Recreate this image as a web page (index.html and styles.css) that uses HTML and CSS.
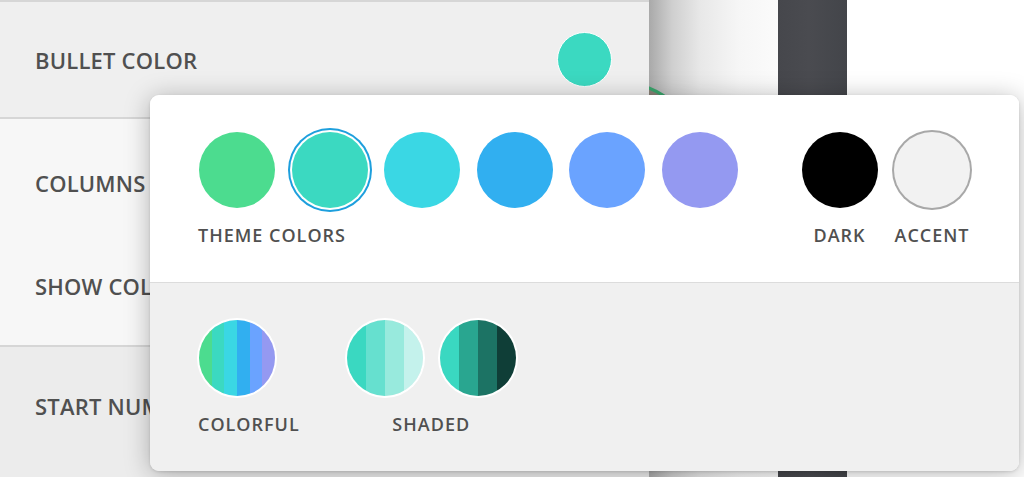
FILE: index.html
```html
<!DOCTYPE html>
<html>
<head>
<meta charset="utf-8">
<link rel="stylesheet" href="styles.css">
</head>
<body>
<div class="app">
  <div class="panel">
    <div class="topline"></div>
    <div class="row row-first">
      <span class="label">BULLET COLOR</span>
      <span class="bullet-dot"></span>
    </div>
    <div class="sep"></div>
    <div class="group">
      <div class="row row-mid"><span class="label">COLUMNS</span></div>
      <div class="row row-mid"><span class="label">SHOW COLUMN DIVIDERS</span></div>
    </div>
    <div class="sep"></div>
    <div class="row row-last"><span class="label">START NUMBER</span></div>
  </div>
  <div class="canvas"><span class="photo-ring"></span></div>
  <div class="darkbar"></div>
  <div class="blank"></div>

  <div class="popup">
    <div class="pop-top">
      <div class="sw-group">
        <div class="sw-row">
          <span class="sw c-green"></span>
          <span class="sw c-teal selected"></span>
          <span class="sw c-cyan"></span>
          <span class="sw c-blue"></span>
          <span class="sw c-lblue"></span>
          <span class="sw c-purple"></span>
        </div>
        <div class="sw-label left">THEME COLORS</div>
      </div>
      <div class="sw-pair">
        <div class="sw-group">
          <div class="sw-row"><span class="sw c-dark"></span></div>
          <div class="sw-label">DARK</div>
        </div>
        <div class="sw-group">
          <div class="sw-row"><span class="sw c-accent"></span></div>
          <div class="sw-label">ACCENT</div>
        </div>
      </div>
    </div>
    <div class="pop-bottom">
      <div class="sw-group narrow">
        <div class="sw-row">
          <span class="sw striped colorful"></span>
        </div>
        <div class="sw-label left">COLORFUL</div>
      </div>
      <div class="sw-group shaded-group">
        <div class="sw-row">
          <span class="sw striped shade-light"></span>
          <span class="sw striped shade-dark"></span>
        </div>
        <div class="sw-label">SHADED</div>
      </div>
    </div>
  </div>
</div>
</body>
</html>
```

FILE: styles.css
```css
* { box-sizing: border-box; }
html, body { margin: 0; padding: 0; }
body {
  width: 1024px;
  height: 477px;
  overflow: hidden;
  font-family: "Open Sans", "Noto Sans", sans-serif;
  background: #fff;
}
.app {
  position: relative;
  display: flex;
  width: 1024px;
  height: 477px;
}
.panel {
  width: 649px;
  flex: none;
  background: #ececec;
  display: flex;
  flex-direction: column;
  overflow: hidden;
}
.topline { height: 2px; background: #d6d6d6; flex: none; }
.sep { height: 2px; background: #d6d6d6; flex: none; }
.row {
  display: flex;
  align-items: center;
  justify-content: space-between;
  padding: 0 37px 0 35px;
  white-space: nowrap;
}
.row-first { height: 115px; background: #efefef; }
.group { background: #f7f7f7; padding: 12px 0 7px; }
.row-mid { height: 103.5px; }
.row-last { height: 117px; background: #ececec; }
.label {
  font-size: 22px;
  font-weight: 600;
  color: #505050;
  letter-spacing: 0.2px;
}
.bullet-dot {
  width: 55px;
  height: 55px;
  border-radius: 50%;
  background: #3bd9c1;
  border: 1.5px solid #fff;
}
.canvas {
  position: relative;
  width: 129px;
  flex: none;
  overflow: hidden;
  background: linear-gradient(to right, #a9a9a9 0%, #cfcfcf 18%, #e8e8e8 40%, #f6f6f6 70%, #fbfbfb 100%);
}
.photo-ring {
  position: absolute;
  left: -109px;
  top: 81px;
  width: 160px;
  height: 160px;
  border-radius: 50%;
  border: 3px solid #3aa56c;
  background: #8a8177;
}
.darkbar {
  width: 69px;
  flex: none;
  background: linear-gradient(to right, #46474c, #4a4b50 45%, #43454a);
}
.blank { flex: 1; background: #fff; }

.popup {
  position: absolute;
  left: 150px;
  top: 95px;
  width: 869px;
  height: 376px;
  border-radius: 9px;
  overflow: hidden;
  box-shadow: 0 3px 26px rgba(0, 0, 0, 0.28), 0 1px 3px rgba(0, 0, 0, 0.12);
  display: flex;
  flex-direction: column;
}
.pop-top {
  height: 188px;
  background: #fff;
  border-bottom: 1px solid #dcdcdc;
  display: flex;
  justify-content: space-between;
  padding: 37px 49px 0;
}
.pop-bottom {
  flex: 1;
  background: #f0f0f0;
  display: flex;
  gap: 72px;
  padding: 37px 49px 0;
}
.sw-pair { display: flex; gap: 16.5px; }
.sw-group { display: flex; flex-direction: column; }
.sw-group.narrow { width: 76px; }
.sw-row { display: flex; gap: 16.5px; }
.sw {
  display: block;
  width: 76px;
  height: 76px;
  border-radius: 50%;
  flex: none;
}
.sw-label {
  margin-top: 17px;
  font-size: 18px;
  line-height: 20px;
  font-weight: 600;
  letter-spacing: 1px;
  color: #505050;
  text-align: center;
  white-space: nowrap;
}
.pop-bottom .sw-label { margin-top: 18px; }
.sw-label.left { text-align: left; margin-left: -1px; }
.c-green { background: #4cdc8f; }
.c-teal { background: #3bd9c1; }
.c-cyan { background: #3ad7e4; }
.c-blue { background: #31aff0; }
.c-lblue { background: #6aa3ff; }
.c-purple { background: #9499f1; }
.c-dark { background: #000; }
.c-accent { background: #f2f2f2; box-shadow: 0 0 0 2px #a8a8a8; }
.selected { box-shadow: 0 0 0 2px #fff, 0 0 0 4px #1d9fdd; }
.striped { box-shadow: 0 0 0 2px #fff; }
.colorful {
  background: linear-gradient(to right,
    #4cdc8f 0 16.66%, #3bd9c1 16.66% 33.33%, #3ad7e4 33.33% 50%,
    #31aff0 50% 66.66%, #6aa3ff 66.66% 83.33%, #9499f1 83.33% 100%);
}
.shade-light {
  background: linear-gradient(to right,
    #3ad8c1 0 25%, #66e0cf 25% 50%, #98eadd 50% 75%, #c4f2ec 75% 100%);
}
.shade-dark {
  background: linear-gradient(to right,
    #3ad8c1 0 25%, #29a690 25% 50%, #1c7364 50% 75%, #0f3e37 75% 100%);
}
```
